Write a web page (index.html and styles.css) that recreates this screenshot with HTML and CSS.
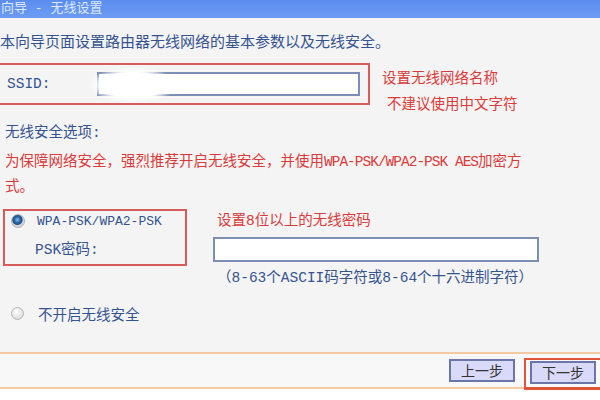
FILE: index.html
```html
<!DOCTYPE html>
<html lang="zh-CN">
<head>
  <meta charset="UTF-8">
  <meta name="viewport" content="width=device-width, initial-scale=1.0">
  <title>设置向导 - 无线设置</title>
  <link rel="stylesheet" href="styles.css">
</head>
<body>
  <div class="main">
    <div class="titlebar"><span class="title">向导 - 无线设置</span></div>

    <p class="intro">本向导页面设置路由器无线网络的基本参数以及无线安全。</p>

    <div class="ssid-row">
      <div class="ssid-box">
        <label class="ssid-label" for="ssid">SSID:</label>
        <div class="ssid-field">
          <input type="text" id="ssid" class="field">
        </div>
      </div>
      <div class="ssid-hint">
        <p>设置无线网络名称</p>
        <p class="indent">不建议使用中文字符</p>
      </div>
    </div>

    <p class="section-title">无线安全选项:</p>
    <p class="warning">为保障网络安全，强烈推荐开启无线安全，并使用<span class="latin">WPA-PSK/WPA2-PSK AES</span>加密方<br>式。</p>

    <div class="psk-row">
      <div class="psk-box">
        <div class="option">
          <span class="radio checked"></span>
          <span class="option-text">WPA-PSK/WPA2-PSK</span>
        </div>
        <div class="psk-label">PSK密码:</div>
      </div>
      <div class="psk-side">
        <p class="psk-tip">设置8位以上的无线密码</p>
        <input type="password" class="field psk-field">
        <p class="psk-hint">（8-63个ASCII码字符或8-64个十六进制字符）</p>
      </div>
    </div>

    <div class="option no-security">
      <span class="radio"></span>
      <span class="option-text">不开启无线安全</span>
    </div>
  </div>

  <div class="footer">
    <button class="btn">上一步</button>
    <div class="next-mark">
      <button class="btn">下一步</button>
    </div>
  </div>
</body>
</html>
```

FILE: styles.css
```css
* {
  margin: 0;
  padding: 0;
  box-sizing: border-box;
}

body {
  width: 600px;
  height: 400px;
  overflow: hidden;
  background-color: #fff;
  font-family: "Liberation Mono", "Noto Sans CJK SC", monospace;
  font-size: 14.5px;
  color: #34538f;
}

.main {
  height: 352px;
  background-color: #f4f4f4;
}

.titlebar {
  height: 18px;
  background: linear-gradient(#5b8def, #6c9cf4);
  color: #dfe9ff;
  font-size: 13px;
  line-height: 18px;
  white-space: nowrap;
  overflow: hidden;
}

.title {
  display: inline-block;
  padding-left: 1px;
}

.intro {
  margin-top: 16px;
  font-size: 15px;
  line-height: 20px;
  white-space: nowrap;
}

/* SSID */
.ssid-row {
  display: flex;
  align-items: flex-start;
  margin-top: 9px;
}

.ssid-box {
  display: flex;
  align-items: center;
  width: 376px;
  height: 42px;
  margin-left: -6px;
  padding-left: 11px;
  border: 2px solid #d65c5c;
}

.ssid-label {
  width: 90px;
}

.ssid-field {
  position: relative;
}

.ssid-field::before {
  content: "";
  position: absolute;
  left: -10px;
  top: -5px;
  width: 92px;
  height: 36px;
  border-radius: 50%;
  background: radial-gradient(#fff 50%, rgba(255, 255, 255, 0) 70%);
}

.field {
  display: block;
  height: 24px;
  border: 2px solid #7c8db8;
  background-color: #fff;
  outline: none;
}

#ssid {
  width: 263px;
}

.ssid-hint {
  margin: 3px 0 0 12px;
  line-height: 26px;
  color: #d93b3b;
  white-space: nowrap;
}

.indent {
  padding-left: 5px;
}

/* security */
.section-title {
  margin: 5px 0 0 5px;
  line-height: 20px;
}

.warning {
  margin: 7px 0 0 5px;
  line-height: 25px;
  color: #d93b3b;
  white-space: nowrap;
}

.latin {
  letter-spacing: -1px;
}

.psk-row {
  display: flex;
  align-items: flex-start;
  margin-top: 9px;
}

.psk-box {
  width: 184px;
  height: 57px;
  margin-left: 3px;
  border: 2px solid #d65c5c;
}

.option {
  display: flex;
  align-items: center;
  height: 20px;
}

.psk-box .option {
  padding-left: 6px;
}

.option-text {
  margin-left: 12px;
  white-space: nowrap;
}

.psk-box .option-text {
  font-size: 13px;
}

.psk-label {
  margin-top: 9px;
  padding-left: 30px;
  line-height: 20px;
}

.radio {
  width: 13px;
  height: 13px;
  border-radius: 50%;
  border: 1px solid #b4b4b4;
  background: radial-gradient(circle at 40% 35%, #ffffff, #d0d0d0);
  flex-shrink: 0;
}

.radio.checked {
  width: 14px;
  height: 14px;
  border-color: #a9b3bd;
  background: radial-gradient(circle at 45% 40%, #8cc0ea 0, #2a66a6 30%, #1d4f86 48%, #d8dadc 58%, #c2c4c6 100%);
}

.psk-side {
  margin: 2px 0 0 26px;
}

.psk-tip {
  padding-left: 4px;
  line-height: 20px;
  color: #d93b3b;
}

.psk-field {
  width: 326px;
  height: 25px;
  margin-top: 6px;
}

.psk-hint {
  margin-top: 6px;
  padding-left: 4px;
  line-height: 20px;
  white-space: nowrap;
}

.no-security {
  margin-top: 15px;
  padding-left: 11px;
}

.no-security .option-text {
  margin-left: 14px;
}

/* footer */
.footer {
  display: flex;
  align-items: center;
  justify-content: flex-end;
  height: 37px;
  border-top: 2px solid #f2c9a0;
  border-bottom: 2px solid #f2c9a0;
  background-color: #f8f8f8;
}

.btn {
  height: 23px;
  padding: 0 10px;
  border: 2px solid #6a76a8;
  background-color: #d9d9f9;
  color: #333;
  font-family: "Noto Sans CJK SC", sans-serif;
  font-size: 14px;
  line-height: 19px;
  cursor: pointer;
}

.next-mark {
  display: flex;
  margin: 2px -6px -4px 9px;
  padding: 1px 8px 3px 4px;
  border: 2px solid #e0553a;
  border-bottom-width: 3px;
}
```
